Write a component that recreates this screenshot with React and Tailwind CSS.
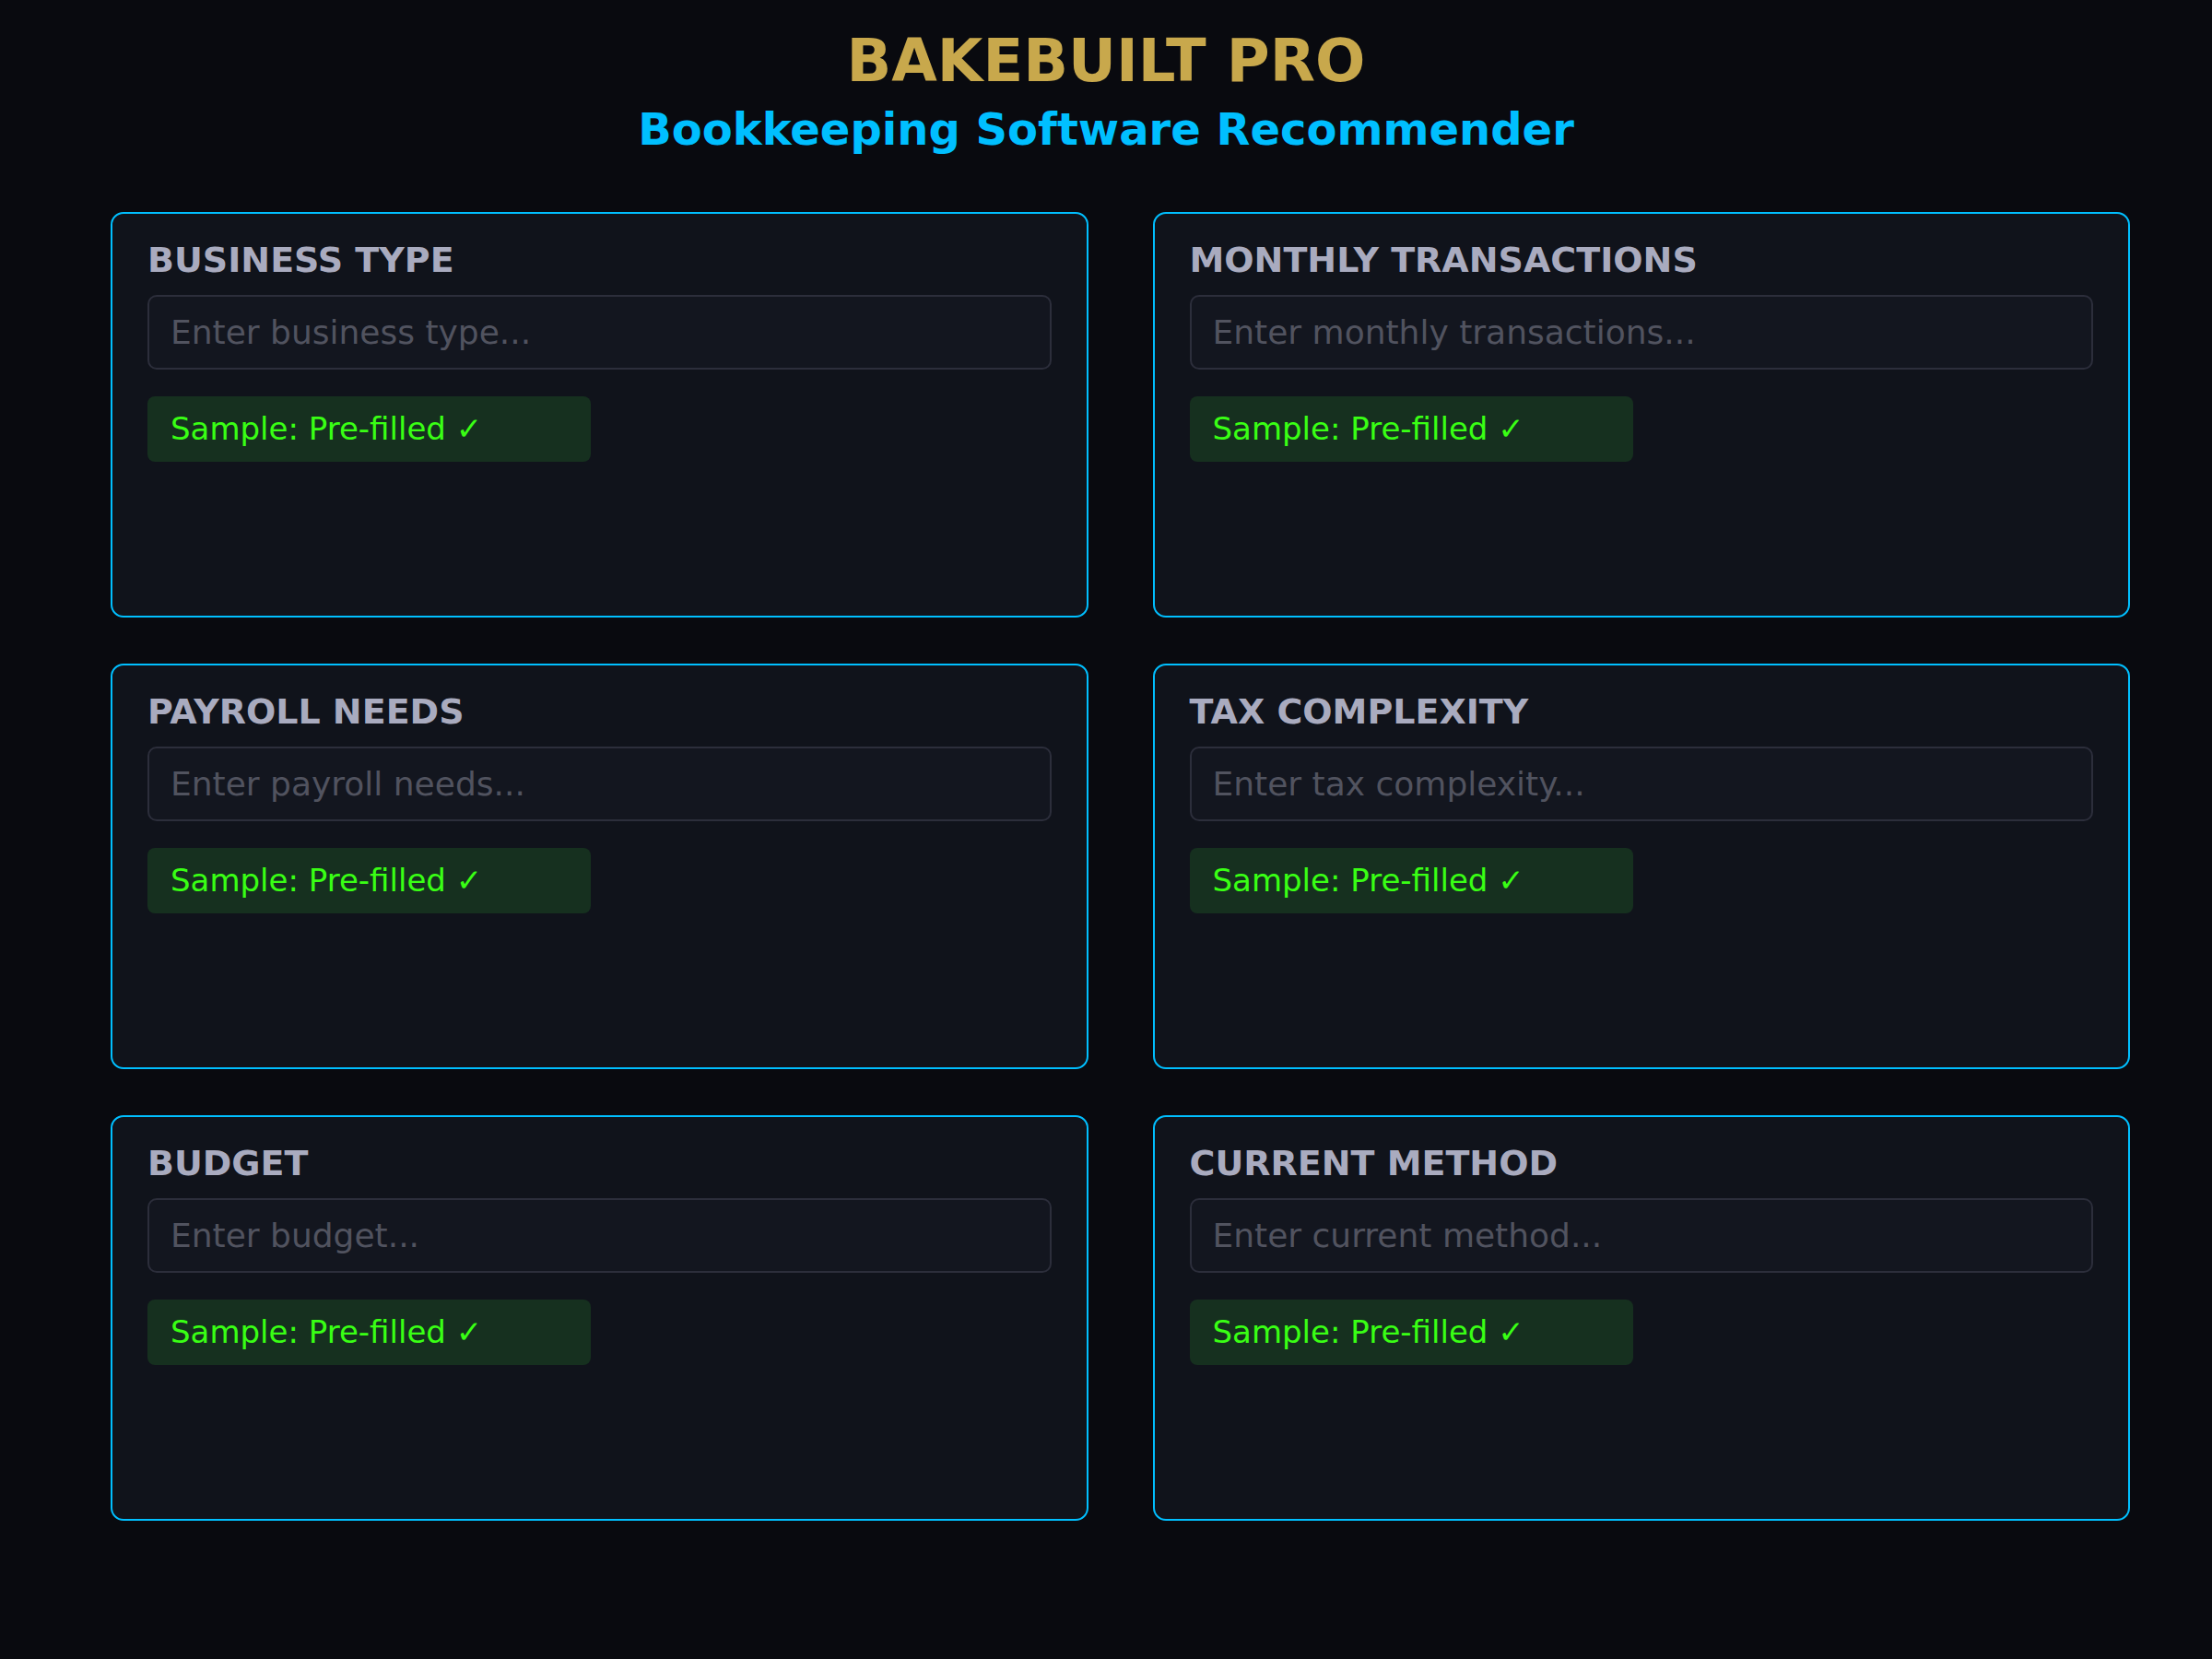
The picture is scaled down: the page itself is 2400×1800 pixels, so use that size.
import React from 'react';

const fields = [
  { id: 'business', label: 'BUSINESS TYPE', placeholder: 'Enter business type...' },
  { id: 'transactions', label: 'MONTHLY TRANSACTIONS', placeholder: 'Enter monthly transactions...' },
  { id: 'payroll', label: 'PAYROLL NEEDS', placeholder: 'Enter payroll needs...' },
  { id: 'tax', label: 'TAX COMPLEXITY', placeholder: 'Enter tax complexity...' },
  { id: 'budget', label: 'BUDGET', placeholder: 'Enter budget...' },
  { id: 'method', label: 'CURRENT METHOD', placeholder: 'Enter current method...' },
];

function FieldCard({ label, placeholder }) {
  return (
    <div className="h-[440px] rounded-[14px] border-2 border-[#00bfff] bg-[#10131b] px-[38px] pt-[28px]">
      <div className="text-[38px] leading-[45px] font-bold text-[#a9abbf]">{label}</div>
      {/* input box */}
      <input
        type="text"
        placeholder={placeholder}
        className="mt-[15px] block h-[81px] w-full rounded-[10px] border-2 border-[#2c2e3b] bg-[#13161f] px-[23px] text-[36px] text-[#c9cad6] outline-none placeholder:text-[#51535f]"
      />
      <div className="mt-[29px] flex h-[71px] w-[481px] items-center rounded-[8px] bg-[#16301f] px-[25px] text-[34px] text-[#39ff14]">
        Sample: Pre-filled ✓
      </div>
    </div>
  );
}

export default function App() {
  return (
    <div
      className="min-h-[1800px] w-full bg-[#090a0f]"
      style={{ fontFamily: '"DejaVu Sans", Verdana, sans-serif' }}
    >
      <header className="flex flex-col items-center pt-[34px]">
        <h1 className="text-[64px] leading-[64px] font-bold text-[#c8a84c]">BAKEBUILT PRO</h1>
        <h2 className="mt-[18px] text-[48px] leading-[48px] font-bold text-[#00bfff]">
          Bookkeeping Software Recommender
        </h2>
      </header>

      <div className="mt-[66px] grid grid-cols-2 gap-x-[70px] gap-y-[50px] pl-[120px] pr-[89px]">
        {fields.map((f) => (
          <FieldCard key={f.id} label={f.label} placeholder={f.placeholder} />
        ))}
      </div>
    </div>
  );
}
